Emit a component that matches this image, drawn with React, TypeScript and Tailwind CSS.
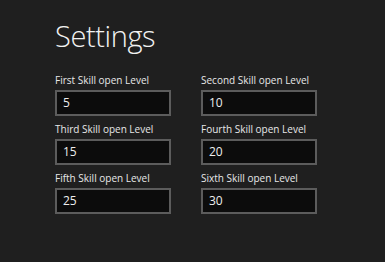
const FIELDS = [
  { label: 'First Skill open Level', value: '5' },
  { label: 'Second Skill open Level', value: '10' },
  { label: 'Third Skill open Level', value: '15' },
  { label: 'Fourth Skill open Level', value: '20' },
  { label: 'Fifth Skill open Level', value: '25' },
  { label: 'Sixth Skill open Level', value: '30' },
];

export default function App() {
  return (
    <div
      className="w-[385px] h-[262px] bg-[#1f1f1f] text-[#f2f2f2] pl-[55px] pt-[18px]"
      style={{ fontFamily: '"Open Sans", "Noto Sans", sans-serif' }}
    >
      <h1 className="text-[29px] leading-[36px] font-light tracking-[-0.4px] mb-[19px]">Settings</h1>

      <div className="grid grid-cols-[116px_116px] gap-x-[30px] gap-y-[6px]">
        {FIELDS.map((f) => (
          <div key={f.label} className="flex flex-col">
            <label className="text-[10px] leading-[15px] mb-[2px] text-[#e8e8e8]">{f.label}</label>
            <div className="h-[26px] bg-[#0c0c0c] border-2 border-[#5c5c5c] flex items-center pl-[6px] text-[12px] text-[#eeeeee]">
              {f.value}
            </div>
          </div>
        ))}
      </div>
    </div>
  );
}
